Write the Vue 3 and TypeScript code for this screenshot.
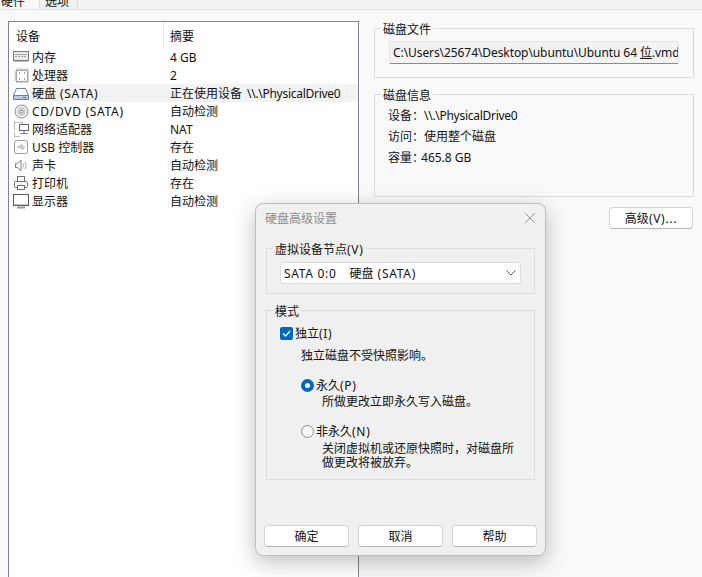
<script setup lang="ts">
interface Device { icon: string; name: string; nameLat?: string; summary: string; sumTight?: string; selected?: boolean }
const devices: Device[] = [
  { icon: 'mem', name: '内存', summary: '4 GB' },
  { icon: 'cpu', name: '处理器', summary: '2' },
  { icon: 'hdd', name: '硬盘', nameLat: '(SATA)', summary: '正在使用设备', sumTight: '\\\\.\\PhysicalDrive0', selected: true },
  { icon: 'cd', name: '', nameLat: 'CD/DVD (SATA)', summary: '自动检测' },
  { icon: 'net', name: '网络适配器', summary: 'NAT' },
  { icon: 'usb', name: 'USB 控制器', summary: '存在' },
  { icon: 'snd', name: '声卡', summary: '自动检测' },
  { icon: 'prn', name: '打印机', summary: '存在' },
  { icon: 'mon', name: '显示器', summary: '自动检测' },
]
</script>

<template>
  <div class="page">
    <div class="tabs">
      <div class="tab tab-on">硬件</div>
      <div class="tab">选项</div>
    </div>
    <div class="body">
      <div class="list">
        <div class="head">
          <div class="hc hc1">设备</div>
          <div class="hc hc2">摘要</div>
        </div>
        <div v-for="d in devices" :key="d.icon" class="row">
          <svg class="ico" width="17" height="17" viewBox="0 0 17 17" fill="none" stroke="#6f6f6f" stroke-width="1">
            <template v-if="d.icon === 'mem'">
              <rect x="0.5" y="2.5" width="15" height="9" fill="#e9e9e9" stroke="#7d7d7d" />
              <path d="M2 5.500h12" stroke="#a2a2a2" />
              <path d="M2 7.500h12" stroke="#a2a2a2" stroke-dasharray="2 1" />
              <path d="M1 12.500h14" stroke="#b5b5b5" />
            </template>
            <template v-else-if="d.icon === 'cpu'">
              <path d="M4 1.500v2M6 1.500v2M8 1.500v2M10 1.500v2M12 1.500v2M14 1.500v2M4 14v2M6 14v2M8 14v2M10 14v2M12 14v2M14 14v2M1.500 5h2M1.500 7h2M1.500 9h2M1.500 11h2M1.500 13h2M14 5h2M14 7h2M14 9h2M14 11h2M14 13h2" stroke="#9a9a9a" />
              <rect x="3.500" y="3.500" width="11" height="11" fill="#fbfbfb" stroke="#a8a8a8" />
              <path d="M6 6h1M11 6h1M6 12h1M11 12h1" stroke="#444" />
            </template>
            <template v-else-if="d.icon === 'hdd'">
              <path d="M3.500 3.500h9l3 7v4h-15v-4z" fill="#fff" stroke="#5a7fa8" />
              <path d="M0.500 10.500h15" stroke="#5a7fa8" />
              <rect x="1" y="11" width="14" height="3" fill="#b9cbe0" stroke="none" />
              <path d="M10 12.500h3" stroke="#4a6f98" />
            </template>
            <template v-else-if="d.icon === 'cd'">
              <circle cx="8.500" cy="8.500" r="6.500" fill="#f6f6f6" stroke="#8c8c8c" />
              <circle cx="8.500" cy="8.500" r="4" fill="#dcdcdc" stroke="#c2c2c2" />
              <circle cx="8.500" cy="8.500" r="1.500" fill="#fff" stroke="#777" />
            </template>
            <template v-else-if="d.icon === 'net'">
              <path d="M1.500 1.500h8v2M1.500 1.500v8M1.500 11.500v4h5" stroke="#7a7a7a" stroke-dasharray="1 1" />
              <rect x="6.500" y="3.500" width="9" height="6" fill="#fff" stroke="#666" />
              <path d="M11 10v2M7.500 12.500h7" stroke="#777" />
            </template>
            <template v-else-if="d.icon === 'usb'">
              <rect x="1.500" y="1.500" width="13" height="13" rx="2" fill="#fdfdfd" stroke="#9a9a9a" />
              <path d="M4 8h8M6 8l2-2h2M7 8l2 2h2" stroke="#a6a6a6" />
            </template>
            <template v-else-if="d.icon === 'snd'">
              <path d="M2.500 6.500h2l3.500-3.500v11l-3.500-3.500h-2z" fill="#fff" stroke="#808080" />
              <path d="M10 6.500c.7 1.300.7 2.700 0 4M12 5c1.300 2.200 1.300 4.800 0 7" stroke="#a0a0a0" />
            </template>
            <template v-else-if="d.icon === 'prn'">
              <rect x="4.500" y="1.500" width="7" height="5" fill="#fff" />
              <rect x="1.500" y="6.500" width="13" height="6" rx="1" fill="#f6f6f6" />
              <rect x="4.500" y="10.500" width="7" height="4" fill="#fff" />
            </template>
            <template v-else>
              <rect x="0.500" y="1.500" width="15" height="11" fill="#fff" stroke="#5c5c5c" />
              <path d="M1 11.500h14" stroke="#c8c8c8" />
              <path d="M4 14.500h8" stroke="#9a9a9a" stroke-width="2" />
            </template>
          </svg>
          <div class="name" :class="{ sel: d.selected }">{{ d.name }}<span v-if="d.nameLat" class="lat" :class="{ gap: d.name }">{{ d.nameLat }}</span></div>
          <div class="sum" :class="{ sel: d.selected }">{{ d.summary }}<span v-if="d.sumTight" class="tight">{{ d.sumTight }}</span></div>
        </div>
      </div>
      <div class="side">
        <fieldset class="grp grp-file">
          <legend>磁盘文件</legend>
          <div class="path"><span>C:\Users\25674\Desktop\ubuntu\Ubuntu 64 <u>位</u>.vmdk</span></div>
        </fieldset>
        <fieldset class="grp grp-info">
          <legend>磁盘信息</legend>
          <div class="info">设备：<span class="v1 tight">\\.\PhysicalDrive0</span></div>
          <div class="info">访问：<span class="v1">使用整个磁盘</span></div>
          <div class="info">容量：<span class="v2">465.8 GB</span></div>
        </fieldset>
        <div class="adv-row"><button class="btn adv">高级<span class="lat">(V)...</span></button></div>
      </div>
    </div>

    <div class="dialog">
      <div class="title">
        <span>硬盘高级设置</span>
        <svg width="12" height="12" viewBox="0 0 12 12" stroke="#9a9a9a" stroke-width="1" fill="none"><path d="M1 1l10 10M11 1L1 11" /></svg>
      </div>
      <div class="dbody">
        <fieldset class="dg dg-node">
          <legend>虚拟设备节点<span class="lat">(V)</span></legend>
          <div class="combo">
            <span><span class="lat">SATA 0:0</span><span class="disk">硬盘</span><span class="lat gap">(SATA)</span></span>
            <svg width="10" height="6" viewBox="0 0 10 6" fill="none" stroke="#555" stroke-width="1"><path d="M0.500 0.500L5 5l4.500-4.500" /></svg>
          </div>
        </fieldset>
        <fieldset class="dg dg-mode">
          <legend>模式</legend>
          <div class="check-row">
            <span class="check">
              <svg width="13" height="13" viewBox="0 0 13 13" fill="none" stroke="#fff" stroke-width="1.300"><path d="M3 6.500l2.500 2.500L10 4" /></svg>
            </span>
            <span>独立<span class="lat">(I)</span></span>
          </div>
          <div class="note">独立磁盘不受快照影响。</div>
          <div class="radio-row r1"><span class="radio on"></span><span>永久<span class="lat">(P)</span></span></div>
          <div class="desc d1">所做更改立即永久写入磁盘。</div>
          <div class="radio-row r2"><span class="radio"></span><span>非永久<span class="lat">(N)</span></span></div>
          <div class="desc d2">关闭虚拟机或还原快照时，对磁盘所<br />做更改将被放弃。</div>
        </fieldset>
      </div>
      <div class="foot">
        <button class="btn fbtn">确定</button>
        <button class="btn fbtn">取消</button>
        <button class="btn fbtn">帮助</button>
      </div>
    </div>
  </div>
</template>

<style scoped>
.page {
  position: relative;
  width: 702px;
  height: 577px;
  overflow: hidden;
  background: #f9f9f9;
  color: #111;
  font-family: "Noto Sans", "Noto Sans CJK SC", sans-serif;
  font-size: 12px;
}
.lat { letter-spacing: 0.7px; }
.gap { margin-left: 4px; }
.tight { letter-spacing: -0.28px; margin-left: 5px; }
.tabs {
  height: 9px;
  display: flex;
  align-items: flex-end;
  background: #f3f3f3;
  border-bottom: 1px solid #e2e2e2;
  overflow: hidden;
}
.tab {
  flex: none;
  width: 38px;
  height: 20px;
  line-height: 14px;
  box-sizing: border-box;
  padding: 6px 3px 0 0;
  text-align: center;
  border-right: 1px solid #dcdcdc;
  background: #f0f0f0;
}
.tab-on { background: #f9f9f9; width: 40px; text-align: right; padding-right: 14px; }
.body { display: flex; align-items: flex-start; padding: 11px 8px 0; }
.list {
  flex: none;
  width: 351px;
  height: 560px;
  box-sizing: border-box;
  background: #fff;
  border: 1px solid #7f858c;
  padding-left: 5px;
  border-bottom: none;
}
.head { display: flex; height: 26px; }
.hc { line-height: 26px; padding-top: 2px; box-sizing: border-box; }
.hc1 { width: 149px; padding-left: 2px; }
.hc2 { flex: 1; padding-left: 6px; border-left: 1px solid #e8e8e8; height: 26px; }
.row { display: flex; align-items: center; height: 18px; }
.ico { flex: none; margin-left: -1px; }
.name { width: 133px; height: 18px; line-height: 20px; flex: none; padding-left: 2px; box-sizing: border-box; white-space: nowrap; }
.sum { flex: 1; height: 18px; line-height: 20px; padding-left: 7px; }
.sel { background: #f2f2f2; }
.side { flex: none; width: 320px; margin-left: 15px; margin-top: -2px; }
.grp, .dg {
  margin: 0;
  padding: 0;
  min-width: 0;
  border: 1px solid #dcdcdc;
  box-sizing: border-box;
}
legend { padding: 4px 2px 0; margin-left: 6px; line-height: 14px; height: 18px; box-sizing: border-box; }
.grp-file { height: 59px; }
.grp-info { height: 112px; margin-top: 7px; }
.path {
  margin: 4px 14px 0;
  height: 23px;
  line-height: 21px;
  box-sizing: border-box;
  background: #f3f3f3;
  border: 1px solid #e6e6e6;
  border-bottom: 1px solid #8a8a8a;
  border-radius: 2px;
  padding-left: 3px;
  overflow: hidden;
  white-space: nowrap;
  letter-spacing: -0.08px;
}
.path span { display: block; width: 285px; overflow: hidden; }
.info { height: 21px; line-height: 21px; padding-left: 13px; }
.info:first-of-type { margin-top: 2px; }
.v1.tight { margin-left: 0; }
.v2 { margin-left: -3px; }
.adv-row { display: flex; justify-content: flex-end; margin-top: 10px; }
.btn {
  font: inherit;
  color: #111;
  background: #fff;
  border: 1px solid #d4d4d4;
  border-bottom-color: #b5b5b5;
  border-radius: 4px;
  padding: 0;
  height: 22px;
}
.adv { width: 84px; margin-right: 1px; }
.dialog {
  position: absolute;
  left: 255px;
  top: 203px;
  width: 291px;
  height: 353px;
  box-sizing: border-box;
  background: #f0f0f0;
  border: 1px solid #bdbdbd;
  border-radius: 8px;
  box-shadow: 0 6px 22px rgba(0, 0, 0, 0.26);
  display: flex;
  flex-direction: column;
}
.title {
  height: 28px;
  display: flex;
  align-items: center;
  justify-content: space-between;
  padding: 0 9px;
  color: #8c8c8c;
  flex: none;
}
.dbody { flex: 1; padding: 7px 10px 0; }
.dg-node { height: 55px; }
.combo {
  margin: 5px 13px 0;
  height: 22px;
  box-sizing: border-box;
  background: #fff;
  border: 1px solid #dcdcdc;
  border-radius: 3px;
  display: flex;
  align-items: center;
  justify-content: space-between;
  padding: 0 4px 0 3px;
}
.disk { margin-left: 13px; }
.dg-mode { height: 179px; margin-top: 7px; }
.check-row { display: flex; align-items: center; gap: 2px; height: 18px; margin: 5px 0 0 13px; }
.check {
  width: 13px;
  height: 13px;
  background: #0067c0;
  border-radius: 2px;
  display: flex;
}
.note { margin: 6px 0 0 34px; line-height: 16px; }
.radio-row { display: flex; align-items: center; gap: 2px; height: 16px; margin-left: 34px; }
.r1 { margin-top: 13px; }
.r2 { margin-top: 14px; }
.radio {
  width: 13px;
  height: 13px;
  box-sizing: border-box;
  background: #f5f5f5;
  border: 1px solid #8f8f8f;
  border-radius: 50%;
}
.radio.on { border: 4px solid #0067c0; background: #fff; }
.desc { margin-left: 55px; line-height: 14px; }
.d1 { margin-top: 2px; }
.d2 { margin-top: 3px; }
.foot { flex: none; display: flex; gap: 9px; padding: 0 8px 8px; }
.fbtn { flex: 1; }
</style>
